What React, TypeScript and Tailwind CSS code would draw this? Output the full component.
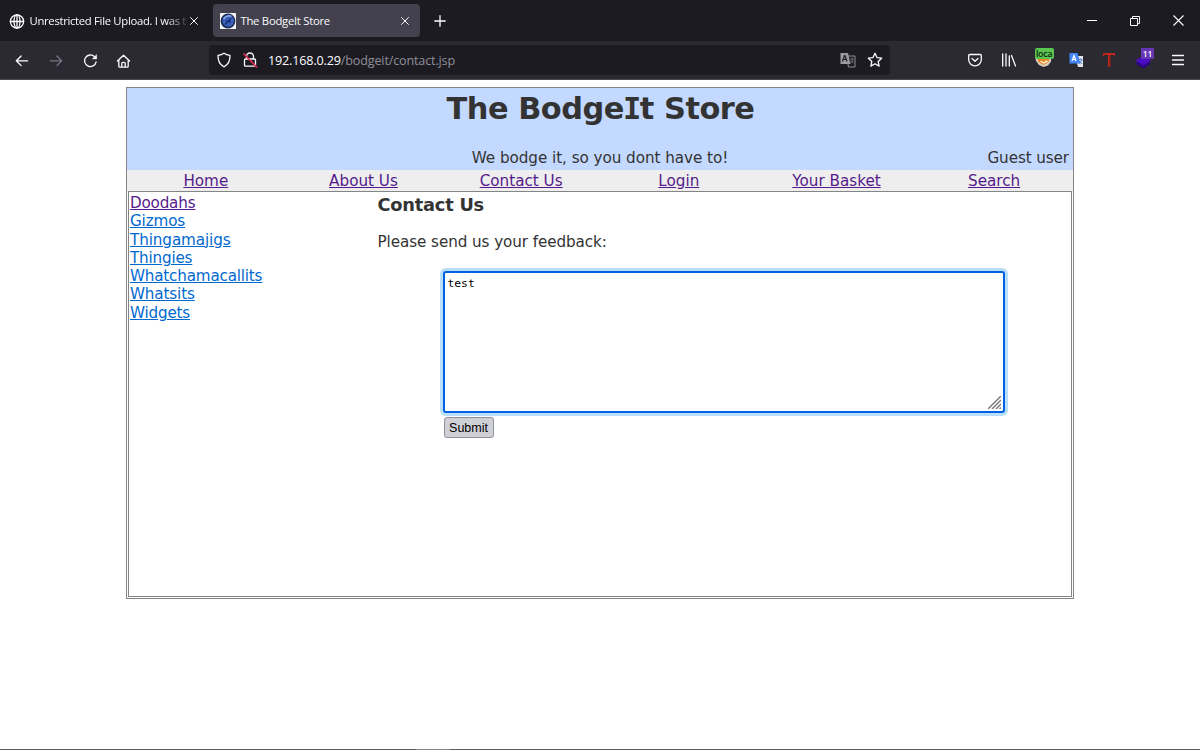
import type { ReactNode } from 'react';

interface NavLink {
  label: string;
  className: string;
}

const navLinks: string[] = ['Home', 'About Us', 'Contact Us', 'Login', 'Your Basket', 'Search'];

const categories: NavLink[] = [
  { label: 'Doodahs', className: 'text-[#551a8b] tracking-[-0.2px]' },
  { label: 'Gizmos', className: 'text-[#0069d0] tracking-[-0.15px]' },
  { label: 'Thingamajigs', className: 'text-[#0069d0] tracking-[-0.1px]' },
  { label: 'Thingies', className: 'text-[#0069d0] tracking-[-0.2px]' },
  { label: 'Whatchamacallits', className: 'text-[#0069d0] tracking-[-0.2px]' },
  { label: 'Whatsits', className: 'text-[#0069d0] tracking-[-0.15px]' },
  { label: 'Widgets', className: 'text-[#0069d0] tracking-[-0.2px]' },
];

function Icon({ children, className = '', size = 16 }: { children: ReactNode; className?: string; size?: number }) {
  return (
    <svg
      width={size}
      height={size}
      viewBox="0 0 16 16"
      fill="none"
      stroke="currentColor"
      strokeWidth="1.3"
      strokeLinecap="round"
      strokeLinejoin="round"
      className={`shrink-0 ${className}`}
      aria-hidden="true"
    >
      {children}
    </svg>
  );
}

function TabBar() {
  return (
    <div className="flex h-[41px] bg-[#1c1b22]">
      <div className="flex w-[213px] items-center pl-[9px]">
        <Icon>
          <circle cx="8" cy="8.5" r="6.6" />
          <ellipse cx="8" cy="8.5" rx="3" ry="6.6" />
          <path d="M1.4 8.5h13.2M8 1.900v13.2" />
        </Icon>
        <span className="ml-[4.500px] w-[159.500px] whitespace-nowrap pt-[2px] text-[11.3px] tracking-[-0.31px] [mask-image:linear-gradient(to_right,black_136px,transparent_160px)]">
          Unrestricted File Upload. I was t
        </span>
        <Icon size={10}>
          <path d="M2.500 2.500l11 11M13.500 2.500l-11 11" strokeWidth="1.6" />
        </Icon>
      </div>
      <div className="my-1 flex h-[33px] w-[207px] items-center rounded-[4px] bg-[#42414d] pl-[7px]">
        <svg width="16" height="16" viewBox="0 0 16 16" className="shrink-0" aria-hidden="true">
          <rect width="16" height="16" fill="#f4f4f0" />
          <circle cx="8" cy="8" r="7.4" fill="#1b2c5c" />
          <circle cx="8.2" cy="8" r="5.8" fill="#3a5fb8" />
          <path d="M3.500 6c2-3 6-4 8-2.500" stroke="#8fabe4" strokeWidth="1.500" fill="none" />
          <path d="M5 11.500l6-6M5.500 8h4l.5 2" stroke="#142a70" strokeWidth="1.200" fill="none" />
        </svg>
        <span className="ml-[4.500px] flex-1 pt-[2px] text-[11.3px] tracking-[-0.27px]">The BodgeIt Store</span>
        <Icon size={10} className="mr-[10px]">
          <path d="M2.500 2.500l11 11M13.500 2.500l-11 11" strokeWidth="1.6" />
        </Icon>
      </div>
      <div className="flex flex-1 items-center pl-[13px]">
        <Icon size={14}>
          <path d="M8 2v12M2 8h12" strokeWidth="1.500" />
        </Icon>
      </div>
      <div className="flex items-center gap-[33px] pr-[16px]">
        <svg width="10" height="10" viewBox="0 0 10 10" stroke="currentColor" aria-hidden="true">
          <path d="M0 4.500h10" />
        </svg>
        <svg width="10" height="10" viewBox="0 0 10 10" fill="none" stroke="currentColor" aria-hidden="true">
          <path d="M.5 2.500h7v7h-7zM2.500 2.500v-2h7v7h-2" />
        </svg>
        <svg width="11" height="11" viewBox="0 0 11 11" stroke="currentColor" aria-hidden="true">
          <path d="M.5 .5l10 10M10.500 .5l-10 10" strokeWidth="1.100" />
        </svg>
      </div>
    </div>
  );
}

function AddressBar() {
  return (
    <div className="flex h-[30px] w-[681px] items-center rounded-[4px] bg-[#1c1b22] pl-[7px] pr-[7px]">
      <Icon>
        <path d="M8 1.200c1.700 1.300 3.500 1.900 6 2.100.2 5.200-1.600 9.300-6 11.500C3.600 12.600 1.800 8.500 2 3.300 4.500 3.100 6.300 2.500 8 1.200z" />
      </Icon>
      <Icon className="ml-[10px]">
        <path d="M4.500 7V4.500a3.500 3.500 0 017 0V7M3.500 7h9a1 1 0 011 1v5.200a1 1 0 01-1 1h-9a1 1 0 01-1-1V8a1 1 0 011-1z" />
        <path d="M2 2l12.500 13" stroke="#e22850" strokeWidth="1.700" />
      </Icon>
      <span className="ml-[10px] flex-1 whitespace-nowrap pt-[2px] text-[12.6px] tracking-[-0.16px]">
        192.168.0.29<span className="text-[#8f8f98]">/bodgeit/contact.jsp</span>
      </span>
      <svg width="16" height="16" viewBox="0 0 16 16" className="mr-[11px]" aria-hidden="true">
        <path d="M6.500 4h8.500v11H8.500z" fill="none" stroke="#8f8f96" />
        <path d="M.5 1h7.500l2.500 11H.5z" fill="#9a9aa0" />
        <path d="M2.500 9.500l2-6h.500l2 6M3.300 7.500h3" stroke="#1c1b22" strokeWidth="1.200" fill="none" />
        <path d="M10.500 7h3M12 6v1M13 7.500c-.5 2-1.500 3-2.500 3.500M11 8.500l2.500 2.500" stroke="#8f8f96" strokeWidth=".8" fill="none" />
      </svg>
      <Icon>
        <path d="M8 1.300l2 4.300 4.700.6-3.500 3.200.9 4.700L8 11.800l-4.100 2.300.9-4.700L1.300 6.200 6 5.600z" />
      </Icon>
    </div>
  );
}

function Extensions() {
  return (
    <div className="ml-[77px] flex items-center">
      <Icon>
        <path d="M2.700 2.500h10.600a1 1 0 011 1V7.500a6.300 6.300 0 01-12.600 0v-4a1 1 0 011-1zM5 6.500l3 2.800 3-2.800" />
      </Icon>
      <Icon className="ml-[18px]">
        <path d="M1.700 2v12M5 2v12M8.300 4v10M10.500 3.500L14.500 14" />
      </Icon>
      <div className="relative ml-[18px] h-[20px] w-[20px]">
        <svg width="20" height="22" viewBox="0 0 20 22" aria-hidden="true">
          <path d="M.5 8h15.500v3.500l-3 4-4.500 1.500-4.500-2-3-4z" fill="#d8cfc0" />
          <path d="M2.500 8h12l-1 4-5 3-5-3z" fill="#e98422" />
          <path d="M5.500 11l3 2 4-2" stroke="#fff0cf" strokeWidth="1.500" fill="none" />
        </svg>
        <span className="absolute left-0 top-[-2px] h-[11px] w-[19px] overflow-hidden rounded-[2px] bg-[#5ac54f] pl-[1px] text-[9px] font-semibold leading-[11px] tracking-[-0.4px] text-[#152915]">
          loca
        </span>
      </div>
      <svg width="16" height="16" viewBox="0 0 16 16" className="ml-[13.500px]" aria-hidden="true">
        <path d="M6 4h8v11H9z" fill="#dfe3ea" />
        <path d="M.5 1h8l3 10.500H.5z" fill="#4285f4" />
        <path d="M3 9l2-5.500 2 5.500M3.700 7.500h2.600" stroke="#fff" strokeWidth="1.200" fill="none" />
        <path d="M9.500 7.500h4M11.500 6.500v1M13 8l-3 4M10.500 9l2.500 3" stroke="#5c88cb" fill="none" />
      </svg>
      <svg width="14" height="16" viewBox="0 0 14 16" className="ml-[17.500px]" aria-hidden="true">
        <path d="M1 1h12v3.500h-.8L11.500 3H8.300v10.500l1.200 1H4.800l1.200-1V3H2.500L1.800 4.500H1z" fill="#b8291b" />
        <path d="M8 4v9.500" stroke="#731b15" strokeWidth=".8" />
      </svg>
      <div className="relative ml-[19px] h-[18px] w-[20px]">
        <svg width="17" height="19" viewBox="0 0 17 19" aria-hidden="true">
          <path d="M.5 12.500l8-5 7.500 5-7.500 5z" fill="#2a0780" />
          <path d="M.5 9.500l8-5 7.500 5-7.500 5z" fill="#4b0bc0" />
        </svg>
        <span className="absolute left-[6px] top-[-3px] h-[11px] w-[13px] rounded-[1px] bg-[#6636b5] text-center text-[8.500px] font-semibold leading-[11px]">
          11
        </span>
      </div>
      <Icon className="ml-[14.500px]">
        <path d="M2.500 3.500H13.500M2.500 8H13.500M2.500 12.500H13.500" />
      </Icon>
    </div>
  );
}

function Toolbar() {
  return (
    <div className="flex h-[39px] items-center border-b border-[#4a4950] bg-[#2b2a33] pl-[15px]">
      <Icon size={14}>
        <path d="M14.500 8.900h-13M7 3.400L1.500 8.900l5.500 5.500" strokeWidth="1.500" />
      </Icon>
      <Icon size={14} className="ml-[20px] text-[#77767f]">
        <path d="M1.500 8.900h13M9 3.400l5.500 5.500L9 14.400" strokeWidth="1.500" />
      </Icon>
      <Icon size={15} className="ml-[19.500px]">
        <path d="M14 9.500A6.200 6.200 0 1112.400 4l1.300 1.600" strokeWidth="1.400" />
        <path d="M14.500 2v4.300H10.200z" fill="currentColor" strokeWidth=".5" />
      </Icon>
      <Icon size={15} className="ml-[18.500px]">
        <path d="M1.500 8.500L8 2.300 14.500 8.500M3 7.500V14a1 1 0 001 1h8a1 1 0 001-1V7.500M6.200 14.700V11a1 1 0 011-1h1.600a1 1 0 011 1v3.700" strokeWidth="1.400" />
      </Icon>
      <div className="ml-[78px]">
        <AddressBar />
      </div>
      <Extensions />
    </div>
  );
}

function StoreHeader() {
  return (
    <header className="h-[82px] bg-[#c3d9ff] text-center">
      <h1 className="h-[60px] pt-[2px] pl-[1px] text-[30.4px] font-bold leading-[38px] tracking-[-0.47px]">
        The Bodge
        {/* the mono face has the slab-sided capital I */}
        <span className="mx-[-1px] font-['DejaVu_Sans_Mono',monospace] leading-[1px]">I</span>t Store
      </h1>
      <div className="grid grid-cols-3 leading-[20px]">
        <span />
        <span className="tracking-[-0.05px]">We bodge it, so you dont have to!</span>
        <span className="pr-[4px] text-right tracking-[-0.1px]">Guest user</span>
      </div>
    </header>
  );
}

function FeedbackForm() {
  return (
    <form className="ml-[65.500px] mt-[19px] w-[562px]">
      <div className="relative h-[142px] rounded-[3px] border-2 border-[#0061e0] bg-white px-[2.500px] py-[3px] font-['DejaVu_Sans_Mono','Liberation_Mono',monospace] text-[11.300px] leading-[15px] text-black ring-[3px] ring-[#b9defa]">
        test
        <svg width="13" height="13" viewBox="0 0 13 13" className="absolute bottom-[2px] right-[2px]" stroke="#777" strokeWidth="1.400" aria-hidden="true">
          <path d="M0 13L13 0M4 13l9-9M8 13l5-5M11.500 13l1.500-1.500" />
        </svg>
      </div>
      <button
        type="button"
        className="mt-[4px] ml-[0.500px] block h-[21px] w-[50px] rounded-[3px] border border-[#8f8f9d] bg-[#d0d0d7] font-['Liberation_Sans',sans-serif] text-[12.500px] leading-[18px] text-black"
      >
        Submit
      </button>
    </form>
  );
}

export default function App() {
  return (
    <div className="flex h-[750px] flex-col bg-white font-['DejaVu_Sans',Verdana,sans-serif] text-[15.200px] text-[#333]">
      <div className="font-['Open_Sans','Noto_Sans',sans-serif] text-[#fbfbfe]">
        <TabBar />
        <Toolbar />
      </div>
      <main className="mx-auto mt-[7px] flex h-[512px] w-[948px] flex-col border border-[#858585]">
        <StoreHeader />
        <nav className="grid h-[21px] grid-cols-6 bg-[#eee] text-center leading-[22px] text-[#551a8b]">
          {navLinks.map(label => (
            <a key={label} className="underline">
              {label}
            </a>
          ))}
        </nav>
        <div className="mx-px mb-px flex flex-1 border border-[#858585]">
          <ul className="w-[248.500px] pl-px pt-[2px]">
            {categories.map(cat => (
              <li key={cat.label} className="h-[18.300px] leading-[18.600px]">
                <a className={`underline ${cat.className}`}>{cat.label}</a>
              </li>
            ))}
          </ul>
          <section className="pt-[2px]">
            <h3 className="text-[17.800px] font-bold leading-[22px] tracking-[-0.22px]">Contact Us</h3>
            <p className="mt-[16px] leading-[20px] tracking-[-0.08px]">Please send us your feedback:</p>
            <FeedbackForm />
          </section>
        </div>
      </main>
      <div className="mt-auto flex h-px bg-[#5c5c5c]">
        <div className="ml-[416px] w-[34px] bg-[#858585]" />
      </div>
    </div>
  );
}
